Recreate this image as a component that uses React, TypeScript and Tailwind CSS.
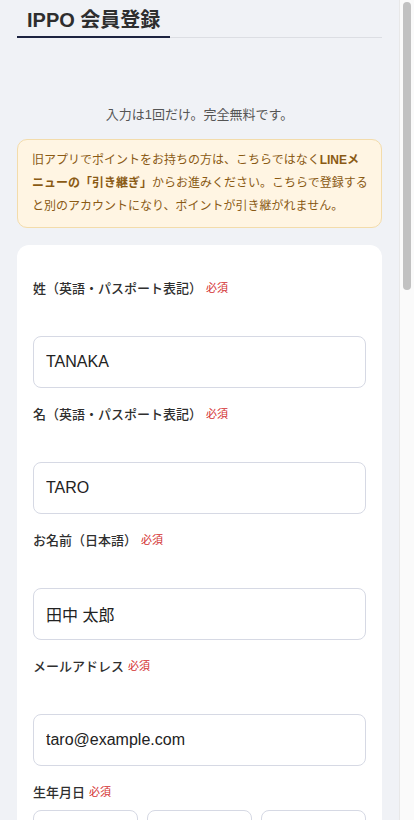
import React from "react";

const font = {
  fontFamily: '"Liberation Sans", "Noto Sans CJK JP", sans-serif',
};

const Required = () => (
  <span className="ml-1 text-[11px] font-normal text-[#d32f2f]">必須</span>
);

interface FieldProps {
  label: string;
  value: string;
  type?: string;
}

const Field = ({ label, value, type = "text" }: FieldProps) => (
  <div className="flex flex-col">
    <label className="mb-[39px] flex items-center text-[13px] font-medium leading-[17px] text-[#2f2f2f]">
      {label}
      <Required />
    </label>
    <input
      type={type}
      defaultValue={value}
      className="h-[52px] w-full rounded-[8px] border border-[#d6d9e4] bg-white px-[12px] text-[16px] text-[#222] outline-none"
      style={font}
    />
  </div>
);

const Select = ({ value }: { value: string }) => (
  <div className="flex h-[52px] items-center justify-between rounded-[8px] border border-[#d6d9e4] bg-white px-[10px] text-[15px] text-[#222]">
    <span>{value}</span>
    <svg width="10" height="6" viewBox="0 0 10 6" fill="none" stroke="#777" strokeWidth="1.5">
      <path d="M1 1l4 4 4-4" />
    </svg>
  </div>
);

export default function App() {
  return (
    <div className="flex h-screen bg-[#f0f2f6]" style={font}>
      <div className="min-w-0 flex-1 overflow-y-auto [scrollbar-width:none]">
        <div className="px-[17px] pb-[60px]">
          {/* Header */}
          <div className="border-b border-[#dcdee3] pt-[6px]">
            <h1 className="-mb-px inline-block border-b-2 border-[#1c2340] px-[10px] pb-[2px] text-[20px] font-bold leading-[28px] text-[#2e2e2e]">
              IPPO 会員登録
            </h1>
          </div>

          <p className="mt-[69px] text-center text-[13px] leading-[16px] text-[#555]">
            入力は1回だけ。完全無料です。
          </p>

          <div className="mt-[16px] rounded-[10px] border border-[#f3dcab] bg-[#fff5e3] py-[9px] pl-[14px] pr-[13px] text-[12px] leading-[23px] text-[#8a5a14]">
            旧アプリでポイントをお持ちの方は、こちらではなく<b>LINEメニューの「引き継ぎ」</b>からお進みください。こちらで登録すると別のアカウントになり、ポイントが引き継がれません。
          </div>

          {/* Form card */}
          <div className="mt-[17px] flex flex-col gap-[18px] rounded-[12px] bg-white px-[16px] pb-[28px] pt-[35px]">
            <Field label="姓（英語・パスポート表記）" value="TANAKA" />
            <Field label="名（英語・パスポート表記）" value="TARO" />
            <Field label="お名前（日本語）" value="田中 太郎" />
            <Field label="メールアドレス" value="taro@example.com" type="email" />

            <div className="flex flex-col">
              <label className="mb-[9px] flex items-center text-[13px] font-medium leading-[17px] text-[#2f2f2f]">
                生年月日
                <Required />
              </label>
              <div className="grid grid-cols-3 gap-[9px]">
                <Select value="1990" />
                <Select value="1" />
                <Select value="1" />
              </div>
            </div>

            <div className="flex flex-col">
              <label className="mb-[9px] flex items-center text-[13px] font-medium leading-[17px] text-[#2f2f2f]">
                性別
                <Required />
              </label>
              <div className="grid grid-cols-3 gap-[9px]">
                {["男性", "女性", "回答しない"].map((g, i) => (
                  <div
                    key={g}
                    className={`flex h-[48px] items-center justify-center rounded-[8px] border text-[14px] ${
                      i === 0 ? "border-[#1c2340] bg-[#1c2340] text-white" : "border-[#d6d9e4] text-[#333]"
                    }`}
                  >
                    {g}
                  </div>
                ))}
              </div>
            </div>

            <Field label="電話番号" value="09012345678" type="tel" />
            <Field label="郵便番号" value="1500001" />
            <Field label="都道府県" value="東京都" />
            <Field label="市区町村・番地" value="渋谷区神宮前1-2-3" />
            <Field label="パスワード" value="password123" type="password" />
            <Field label="パスワード（確認）" value="password123" type="password" />

            <label className="mt-[8px] flex items-start gap-[8px] text-[13px] leading-[20px] text-[#333]">
              <span className="mt-[2px] h-[16px] w-[16px] shrink-0 rounded-[4px] border border-[#b9bdc9] bg-white" />
              <span>
                <span className="text-[#1f5fbf] underline">利用規約</span>と
                <span className="text-[#1f5fbf] underline">プライバシーポリシー</span>に同意します
              </span>
            </label>

            <button className="mt-[12px] h-[52px] w-full rounded-[10px] bg-[#1c2340] text-[16px] font-bold text-white">
              登録する
            </button>
          </div>

          <p className="mt-[24px] text-center text-[12px] text-[#777]">
            すでにアカウントをお持ちの方は<span className="text-[#1f5fbf] underline">ログイン</span>
          </p>
          <div className="h-[140px]" />
        </div>
      </div>

      {/* scrollbar track */}
      <div className="w-[15px] shrink-0 border-l border-[#e8e8e8] bg-[#fafafa] px-[3px] pt-[2px]">
        <div className="h-[288px] rounded-full bg-[#c1c1c1]" />
      </div>
    </div>
  );
}
